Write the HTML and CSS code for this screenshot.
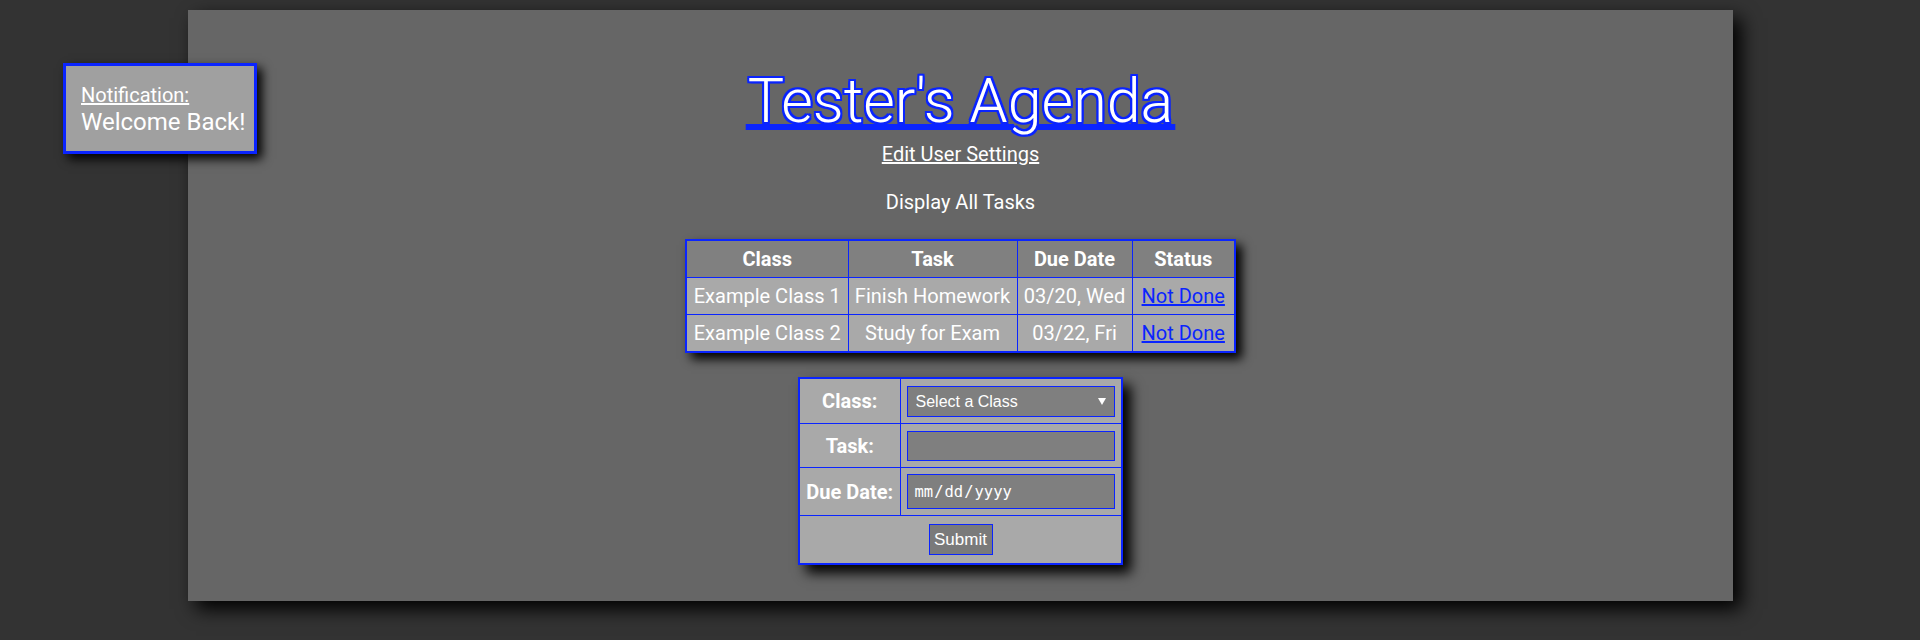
FILE: index.html
```html
<!DOCTYPE html>
<html>
<head>
<meta charset="utf-8">
<title>Tester's Agenda</title>
<link rel="stylesheet" href="styles.css">
</head>
<body>
<div class="notification">
  <span class="note-title">Notification:</span>
  <span class="note-text">Welcome Back!</span>
</div>
<div class="page">
  <h1 class="title"><a href="#">Tester's Agenda</a></h1>
  <a class="settings" href="#">Edit User Settings</a>
  <div class="display">Display All Tasks</div>
  <table class="tasks">
    <colgroup>
      <col class="c1"><col class="c2"><col class="c3"><col class="c4">
    </colgroup>
    <thead>
      <tr><th>Class</th><th>Task</th><th>Due Date</th><th>Status</th></tr>
    </thead>
    <tbody>
      <tr><td>Example Class 1</td><td>Finish Homework</td><td>03/20, Wed</td><td><a class="status" href="#">Not Done</a></td></tr>
      <tr><td>Example Class 2</td><td>Study for Exam</td><td>03/22, Fri</td><td><a class="status" href="#">Not Done</a></td></tr>
    </tbody>
  </table>
  <form class="add">
    <table class="form">
      <colgroup><col class="f1"><col class="f2"></colgroup>
      <tr>
        <th>Class:</th>
        <td><span class="select-wrap"><select class="ctl sel"><option>Select a Class</option></select></span></td>
      </tr>
      <tr>
        <th>Task:</th>
        <td><input class="ctl txt" type="text"></td>
      </tr>
      <tr>
        <th>Due Date:</th>
        <td><input class="ctl date" type="date"></td>
      </tr>
      <tr>
        <td class="submit-cell" colspan="2"><button class="submit" type="button">Submit</button></td>
      </tr>
    </table>
  </form>
</div>
</body>
</html>
```
FILE: styles.css
```css
html, body {
  margin: 0;
  padding: 0;
}
body {
  background: #333333;
  font-family: Roboto, "Liberation Sans", sans-serif;
  color: #ffffff;
  height: 640px;
  overflow: hidden;
}
.page {
  margin: 10px 0 0 188px;
  width: 1545px;
  height: 591px;
  background: #666666;
  box-shadow: 8px 8px 18px #000;
  display: flex;
  flex-direction: column;
  align-items: center;
}
.notification {
  position: absolute;
  left: 63px;
  top: 63px;
  width: 158px;
  height: 79px;
  padding: 3px 15px 3px 15px;
  border: 3px solid #0a24ff;
  background: #a0a0a0;
  box-shadow: 5px 5px 10px #000;
  z-index: 2;
  display: flex;
  flex-direction: column;
  justify-content: center;
  white-space: nowrap;
}
.note-title {
  font-size: 20px;
  line-height: 26px;
  text-decoration: underline;
}
.note-text {
  font-size: 24px;
  line-height: 28px;
}
.title {
  margin: 52px 0 0 0;
  font-size: 61px;
  font-weight: 300;
  line-height: 78px;
}
.title a {
  color: #0a24ff;
  -webkit-text-fill-color: #ffffff;
  text-decoration-line: underline;
  text-decoration-color: #0a24ff;
  text-decoration-thickness: 2px;
  text-underline-offset: 4px;
  text-decoration-skip-ink: auto;
  text-shadow:
    2px 0 0 #0a24ff, -2px 0 0 #0a24ff, 0 2px 0 #0a24ff, 0 -2px 0 #0a24ff,
    2px 2px 0 #0a24ff, -2px -2px 0 #0a24ff, 2px -2px 0 #0a24ff, -2px 2px 0 #0a24ff,
    1px 0 0 #0a24ff, -1px 0 0 #0a24ff, 0 1px 0 #0a24ff, 0 -1px 0 #0a24ff;
}
.settings {
  margin-top: 2px;
  color: #ffffff;
  font-size: 20px;
  line-height: 24px;
  text-decoration: underline;
}
.display {
  margin-top: 24px;
  font-size: 20px;
  line-height: 24px;
}
.tasks {
  margin-top: 25px;
  border-collapse: collapse;
  table-layout: fixed;
  width: 549px;
  border: 2px solid #0a24ff;
  box-shadow: 6px 6px 10px #000;
  font-size: 20px;
}
.c1 { width: 162px; }
.c2 { width: 169px; }
.c3 { width: 115px; }
.c4 { width: 103px; }
.tasks th, .tasks td {
  border: 1px solid #0a24ff;
  padding: 0 4px;
  height: 36px;
  text-align: center;
  white-space: nowrap;
  line-height: 24px;
}
.tasks th {
  background: #808080;
  font-weight: 700;
}
.tasks td {
  background: #a9a9a9;
}
.status {
  color: #0a24ff;
  text-decoration: underline;
}
.add {
  margin: 24px 0 0 0;
}
.form {
  border-collapse: collapse;
  table-layout: fixed;
  width: 323px;
  border: 2px solid #0a24ff;
  box-shadow: 8px 8px 12px #000;
  background: #a9a9a9;
}
.f1 { width: 101px; }
.f2 { width: 222px; }
.form th, .form td {
  border: 1px solid #0a24ff;
  padding: 0 6px;
}
.form th {
  font-size: 20px;
  font-weight: 700;
  text-align: center;
  white-space: nowrap;
  padding: 0 2px;
}
.form tr:nth-child(1) th, .form tr:nth-child(1) td { height: 44px; }
.form tr:nth-child(2) th, .form tr:nth-child(2) td { height: 43px; }
.form tr:nth-child(3) th, .form tr:nth-child(3) td { height: 47px; }
.form tr:nth-child(4) td { height: 47px; }
.ctl {
  display: block;
  box-sizing: border-box;
  width: 208px;
  margin: 0;
  border: 1px solid #0a24ff;
  background: #7f7f7f;
  color: #ffffff;
  font-family: "Liberation Sans", Arial, sans-serif;
  font-size: 16px;
  outline: none;
  border-radius: 0;
}
.select-wrap {
  position: relative;
  display: block;
  width: 208px;
}
.select-wrap::after {
  content: "";
  position: absolute;
  right: 9px;
  top: 12px;
  width: 0;
  height: 0;
  border-left: 4px solid transparent;
  border-right: 4px solid transparent;
  border-top: 7px solid #ffffff;
  pointer-events: none;
}
.sel {
  -webkit-appearance: none;
  appearance: none;
  height: 31px;
  padding: 0 8px;
}
.txt {
  height: 30px;
  padding: 0 6px;
}
.date {
  height: 35px;
  padding: 0 6px;
  font-family: "DejaVu Sans Mono", monospace;
  font-size: 15.5px;
}
.date::-webkit-calendar-picker-indicator {
  display: none;
}
.date::-webkit-datetime-edit {
  color: #ffffff;
}
.submit-cell {
  text-align: center;
}
.submit {
  width: 64px;
  height: 31px;
  padding: 0;
  border: 1px solid #0a24ff;
  background: #7a7a7a;
  color: #ffffff;
  font-family: "Liberation Sans", Arial, sans-serif;
  font-size: 17px;
  border-radius: 0;
}
```
